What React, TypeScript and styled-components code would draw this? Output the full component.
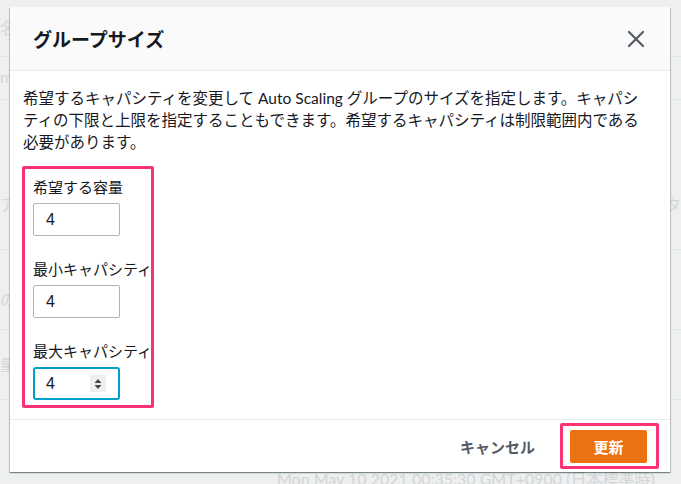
import React from "react";
import styled, { createGlobalStyle } from "styled-components";

const GlobalStyle = createGlobalStyle`
  html, body { margin: 0; padding: 0; }
  body {
    width: 681px;
    height: 484px;
    overflow: hidden;
    background: #eeefef;
    font-family: "Lato", "Noto Sans CJK JP", sans-serif;
    color: #16191f;
  }
`;

const Page = styled.div`
  position: relative;
  width: 681px;
  height: 484px;
  overflow: hidden;
  background: #eeefef;
`;

const BehindPage = styled.div`
  display: flex;
  flex-direction: column;
  height: 100%;
  color: #d6d9d9;
  font-family: "Lato", "Noto Sans CJK JP", sans-serif;
  font-size: 16px;
`;

const BehindRow = styled.div<{ $h: number; $pt: number }>`
  height: ${(p) => p.$h}px;
  box-sizing: border-box;
  display: flex;
  align-items: flex-start;
  justify-content: space-between;
  padding: ${(p) => p.$pt}px 0 0 0;
  line-height: 20px;
  border-bottom: 1px solid #e4e7e7;
`;

const BehindStamp = styled.div`
  margin-top: auto;
  height: 14px;
  padding-left: 277px;
  line-height: 18px;
  font-size: 16px;
  color: #d3d6d6;
  white-space: nowrap;
  overflow: hidden;
`;

const Overlay = styled.div`
  position: absolute;
  inset: 0;
  padding: 7px 11px 12px 10px;
  box-sizing: border-box;
  display: flex;
`;

const Modal = styled.div`
  flex: 1;
  display: flex;
  flex-direction: column;
  background: #ffffff;
  box-shadow: 0 1px 1px 0 rgba(0, 28, 36, 0.3), 1px 1px 1px 0 rgba(0, 28, 36, 0.15),
    -1px 1px 1px 0 rgba(0, 28, 36, 0.15);
`;

const Header = styled.div`
  height: 64px;
  box-sizing: border-box;
  display: flex;
  align-items: center;
  justify-content: space-between;
  padding: 0 24px 0 23px;
  background: #fafafa;
  border-bottom: 1px solid #eaeded;
`;

const Title = styled.h2`
  margin: 0;
  font-family: "Noto Sans CJK JP", sans-serif;
  font-size: 19px;
  font-weight: 700;
  line-height: 24px;
  color: #16191f;
`;

const CloseButton = styled.button`
  display: flex;
  align-items: center;
  justify-content: center;
  width: 20px;
  height: 20px;
  padding: 0;
  border: none;
  background: transparent;
  color: #545b64;
  cursor: pointer;
`;

const Body = styled.div`
  flex: 1;
  display: flex;
  flex-direction: column;
  padding: 16px 20px 8px 13px;
`;

const Description = styled.p`
  margin: 0 0 13px;
  font-size: 15.5px;
  line-height: 22px;
  line-break: strict;
  color: #16191f;
`;

const Highlight = styled.div`
  border: 3px solid #fb3373;
  border-radius: 2px;
`;

const FormBox = styled(Highlight)`
  width: 132px;
  box-sizing: border-box;
  margin-left: -1px;
  padding: 7px 0 5px 8px;
  display: flex;
  flex-direction: column;
  gap: 22px;
`;

const Field = styled.div`
  display: flex;
  flex-direction: column;
  gap: 5px;
`;

const Label = styled.label`
  font-family: "Noto Sans CJK JP", sans-serif;
  font-size: 15px;
  line-height: 22px;
  white-space: nowrap;
  color: #16191f;
`;

const InputWrap = styled.div<{ $focused?: boolean }>`
  width: 87px;
  height: 33px;
  box-sizing: border-box;
  display: flex;
  align-items: center;
  padding: 0 ${(p) => (p.$focused ? "11px" : "12px")};
  border: ${(p) => (p.$focused ? "2px solid #00a1c9" : "1px solid #aab7b8")};
  border-radius: ${(p) => (p.$focused ? "3px" : "2px")};
  background: #ffffff;
`;

const Value = styled.span`
  flex: 1;
  font-family: "Liberation Sans", Arial, sans-serif;
  font-size: 16px;
  color: #16191f;
`;

const Spinner = styled.span`
  width: 16px;
  height: 17px;
  display: flex;
  align-items: center;
  justify-content: center;
  background: #efefef;
  margin-right: 1px;
`;

const Footer = styled.div`
  height: 53px;
  box-sizing: border-box;
  display: flex;
  align-items: center;
  justify-content: flex-end;
  gap: 25px;
  padding: 0 11px 0 23px;
  border-top: 1px solid #eaeded;
`;

const CancelButton = styled.button`
  padding: 0;
  border: none;
  background: transparent;
  font-family: "Noto Sans CJK JP", sans-serif;
  font-size: 15px;
  font-weight: 700;
  color: #545b64;
  cursor: pointer;
`;

const ButtonHighlight = styled(Highlight)`
  padding: 4px 9px 3px 7px;
  display: flex;
`;

const PrimaryButton = styled.button`
  width: 77px;
  height: 33px;
  border: none;
  border-radius: 2px;
  background: #ec7211;
  color: #ffffff;
  font-family: "Noto Sans CJK JP", sans-serif;
  font-size: 15px;
  font-weight: 700;
  cursor: pointer;
`;

const fields = [
  { label: "希望する容量", value: "4" },
  { label: "最小キャパシティ", value: "4" },
  { label: "最大キャパシティ", value: "4", focused: true },
];

const behindRows = [
  { h: 57, pt: 18, left: "名前", right: "" },
  { h: 43, pt: 10, left: "my", right: "" },
  { h: 150, pt: 95, left: "ア", right: "タ" },
  { h: 80, pt: 40, left: "の", right: "" },
  { h: 70, pt: 25, left: "量", right: "" },
];

export default function App() {
  return (
    <>
      <GlobalStyle />
      <Page>
        <BehindPage aria-hidden>
          {behindRows.map((r, i) => (
            <BehindRow key={i} $h={r.h} $pt={r.pt}>
              <span>{r.left}</span>
              <span>{r.right}</span>
            </BehindRow>
          ))}
          <BehindStamp>Mon May 10 2021 00:35:30 GMT+0900 (日本標準時)</BehindStamp>
        </BehindPage>
        <Overlay>
          <Modal role="dialog">
            <Header>
              <Title>グループサイズ</Title>
              <CloseButton aria-label="閉じる">
                <svg width="18" height="18" viewBox="0 0 18 18">
                  <path d="M2 2 L16 16 M16 2 L2 16" stroke="currentColor" strokeWidth="2.2" strokeLinecap="round" />
                </svg>
              </CloseButton>
            </Header>
            <Body>
              <Description>
                希望するキャパシティを変更して Auto Scaling グループのサイズを指定します。キャパシティの下限と上限を指定することもできます。希望するキャパシティは制限範囲内である必要があります。
              </Description>
              <FormBox>
                {fields.map((f) => (
                  <Field key={f.label}>
                    <Label>{f.label}</Label>
                    <InputWrap $focused={f.focused}>
                      <Value>{f.value}</Value>
                      {f.focused && (
                        <Spinner>
                          <svg width="8" height="12" viewBox="0 0 8 12">
                            <path d="M4 1 L7.5 5 H0.5 Z M4 11 L7.5 7 H0.5 Z" fill="#4a4a4a" />
                          </svg>
                        </Spinner>
                      )}
                    </InputWrap>
                  </Field>
                ))}
              </FormBox>
            </Body>
            <Footer>
              <CancelButton>キャンセル</CancelButton>
              <ButtonHighlight>
                <PrimaryButton>更新</PrimaryButton>
              </ButtonHighlight>
            </Footer>
          </Modal>
        </Overlay>
      </Page>
    </>
  );
}
